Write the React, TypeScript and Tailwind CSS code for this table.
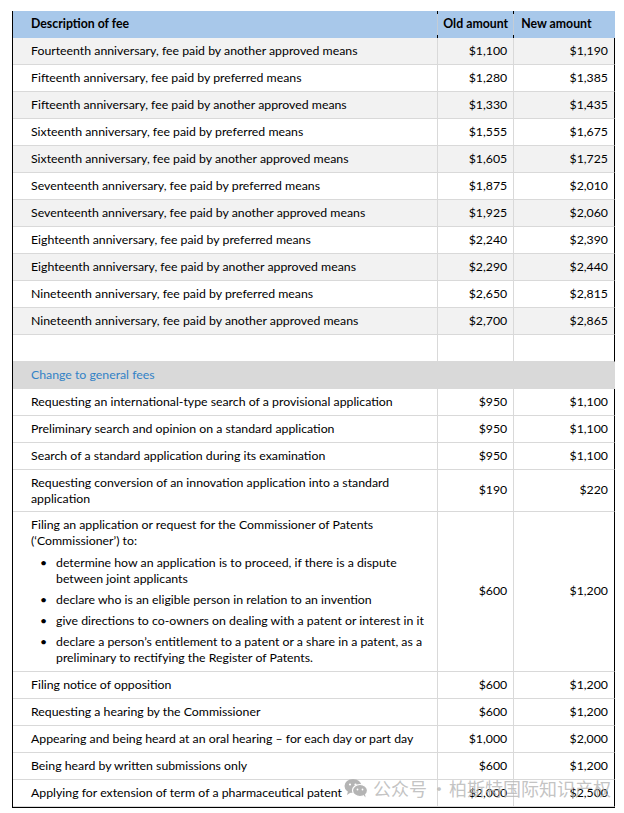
import React from "react";

type Fee = { desc: React.ReactNode; old: string; next: string; shaded?: boolean; tall?: string };

const anniversaryFees: Fee[] = [
  { desc: "Fourteenth anniversary, fee paid by another approved means", old: "$1,100", next: "$1,190", shaded: true },
  { desc: "Fifteenth anniversary, fee paid by preferred means", old: "$1,280", next: "$1,385" },
  { desc: "Fifteenth anniversary, fee paid by another approved means", old: "$1,330", next: "$1,435", shaded: true },
  { desc: "Sixteenth anniversary, fee paid by preferred means", old: "$1,555", next: "$1,675" },
  { desc: "Sixteenth anniversary, fee paid by another approved means", old: "$1,605", next: "$1,725", shaded: true },
  { desc: "Seventeenth anniversary, fee paid by preferred means", old: "$1,875", next: "$2,010" },
  { desc: "Seventeenth anniversary, fee paid by another approved means", old: "$1,925", next: "$2,060", shaded: true },
  { desc: "Eighteenth anniversary, fee paid by preferred means", old: "$2,240", next: "$2,390" },
  { desc: "Eighteenth anniversary, fee paid by another approved means", old: "$2,290", next: "$2,440", shaded: true },
  { desc: "Nineteenth anniversary, fee paid by preferred means", old: "$2,650", next: "$2,815" },
  { desc: "Nineteenth anniversary, fee paid by another approved means", old: "$2,700", next: "$2,865", shaded: true },
];

const commissionerBullets = [
  "determine how an application is to proceed, if there is a dispute between joint applicants",
  "declare who is an eligible person in relation to an invention",
  "give directions to co-owners on dealing with a patent or interest in it",
  "declare a person\u2019s entitlement to a patent or a share in a patent, as a preliminary to rectifying the Register of Patents.",
];

const generalFees: Fee[] = [
  { desc: "Requesting an international-type search of a provisional application", old: "$950", next: "$1,100" },
  { desc: "Preliminary search and opinion on a standard application", old: "$950", next: "$1,100" },
  { desc: "Search of a standard application during its examination", old: "$950", next: "$1,100" },
  {
    desc: "Requesting conversion of an innovation application into a standard application",
    old: "$190",
    next: "$220",
    tall: "h-[42px]",
  },
  {
    desc: (
      <div className="py-[6px]">
        <p className="leading-[16px]">
          Filing an application or request for the Commissioner of Patents (&lsquo;Commissioner&rsquo;) to:
        </p>
        <ul className="mt-[6px] flex flex-col gap-[5px]">
          {commissionerBullets.map((b) => (
            <li key={b} className="flex leading-[16px]">
              <span className="w-[25px] shrink-0 pl-[9px]">&bull;</span>
              <span>{b}</span>
            </li>
          ))}
        </ul>
      </div>
    ),
    old: "$600",
    next: "$1,200",
    tall: "h-[160px]",
  },
  { desc: "Filing notice of opposition", old: "$600", next: "$1,200" },
  { desc: "Requesting a hearing by the Commissioner", old: "$600", next: "$1,200" },
  { desc: "Appearing and being heard at an oral hearing \u2013 for each day or part day", old: "$1,000", next: "$2,000" },
  { desc: "Being heard by written submissions only", old: "$600", next: "$1,200" },
  { desc: "Applying for extension of term of a pharmaceutical patent", old: "$2,000", next: "$2,500" },
];

function FeeRow({ fee }: { fee: Fee }) {
  const bg = fee.shaded ? "bg-[#f2f2f2]" : "bg-white";
  return (
    <div className={`flex ${fee.tall ?? "h-[27px]"} border-b border-[#d9d9d9] border-r-black border-r ${bg}`}>
      <div className="flex w-[425px] items-center pl-[18px] pr-[10px] leading-[16px]">
        {typeof fee.desc === "string" ? <span>{fee.desc}</span> : fee.desc}
      </div>
      <div className="flex w-[76px] items-center justify-end border-l border-[#d9d9d9] pr-[6px]">{fee.old}</div>
      <div className="flex w-[101px] items-center justify-end border-l border-[#d9d9d9] pr-[6px]">{fee.next}</div>
    </div>
  );
}

function WeChatMark() {
  return (
    <svg width="24" height="20" viewBox="0 0 24 20" fill="#b4b4b4">
      <ellipse cx="9" cy="8" rx="8.5" ry="7" />
      <path d="M4 13 L3 17 L7.5 14 Z" />
      <ellipse cx="16" cy="12.5" rx="7.5" ry="6" stroke="white" strokeWidth="1.2" />
      <path d="M19.5 17 L21.5 19.5 L21 15.5 Z" />
      <circle cx="6" cy="6.5" r="1.1" fill="white" />
      <circle cx="11.5" cy="6.5" r="1.1" fill="white" />
      <circle cx="13.5" cy="11.5" r="0.9" fill="white" />
      <circle cx="18.5" cy="11.5" r="0.9" fill="white" />
    </svg>
  );
}

export default function App() {
  return (
    <div
      className="relative h-[813px] w-[624px] bg-white pl-[12px] pt-[11px] text-[12.3px] text-black"
      style={{ fontFamily: "Lato, 'Open Sans', sans-serif" }}
    >
      <div className="w-[603px] border-b border-l border-black">
        {/* header */}
        <div className="flex h-[27px] bg-[#a8c8ea] font-bold">
          <div className="flex w-[425px] items-center pl-[18px]">Description of fee</div>
          <div className="relative flex w-[76px] items-center border-l border-[#c4cdd6] pl-[5px]">
            <span className="absolute -left-px top-0 h-[3px] w-px bg-black" />
            <span className="absolute -left-px bottom-0 h-[3px] w-px bg-black" />
            Old amount
          </div>
          <div className="relative flex w-[102px] items-center border-l border-[#c4cdd6] pl-[7px]">
            <span className="absolute -left-px top-0 h-[3px] w-px bg-black" />
            <span className="absolute -left-px bottom-0 h-[3px] w-px bg-black" />
            New amount
          </div>
        </div>

        {anniversaryFees.map((f, i) => (
          <FeeRow key={i} fee={f} />
        ))}
        <FeeRow fee={{ desc: "", old: "", next: "" }} />

        <div className="flex h-[27px] items-center border-b border-[#d9d9d9] bg-[#d9d9d9] pl-[18px] text-[#3282c6]">
          Change to general fees
        </div>

        {generalFees.map((f, i) => (
          <FeeRow key={i} fee={f} />
        ))}
      </div>

      <div
        className="absolute left-[344px] top-[777px] flex items-center gap-[3px] whitespace-nowrap text-[18px] leading-[22px] text-[#b4b4b4]/80"
        style={{ fontFamily: "'Noto Sans CJK SC', sans-serif" }}
      >
        <WeChatMark />
        <span className="ml-[2px]">公众号</span>
        <span className="w-[16px] text-center">·</span>
        <span>柏斯特国际知识产权</span>
      </div>
    </div>
  );
}
